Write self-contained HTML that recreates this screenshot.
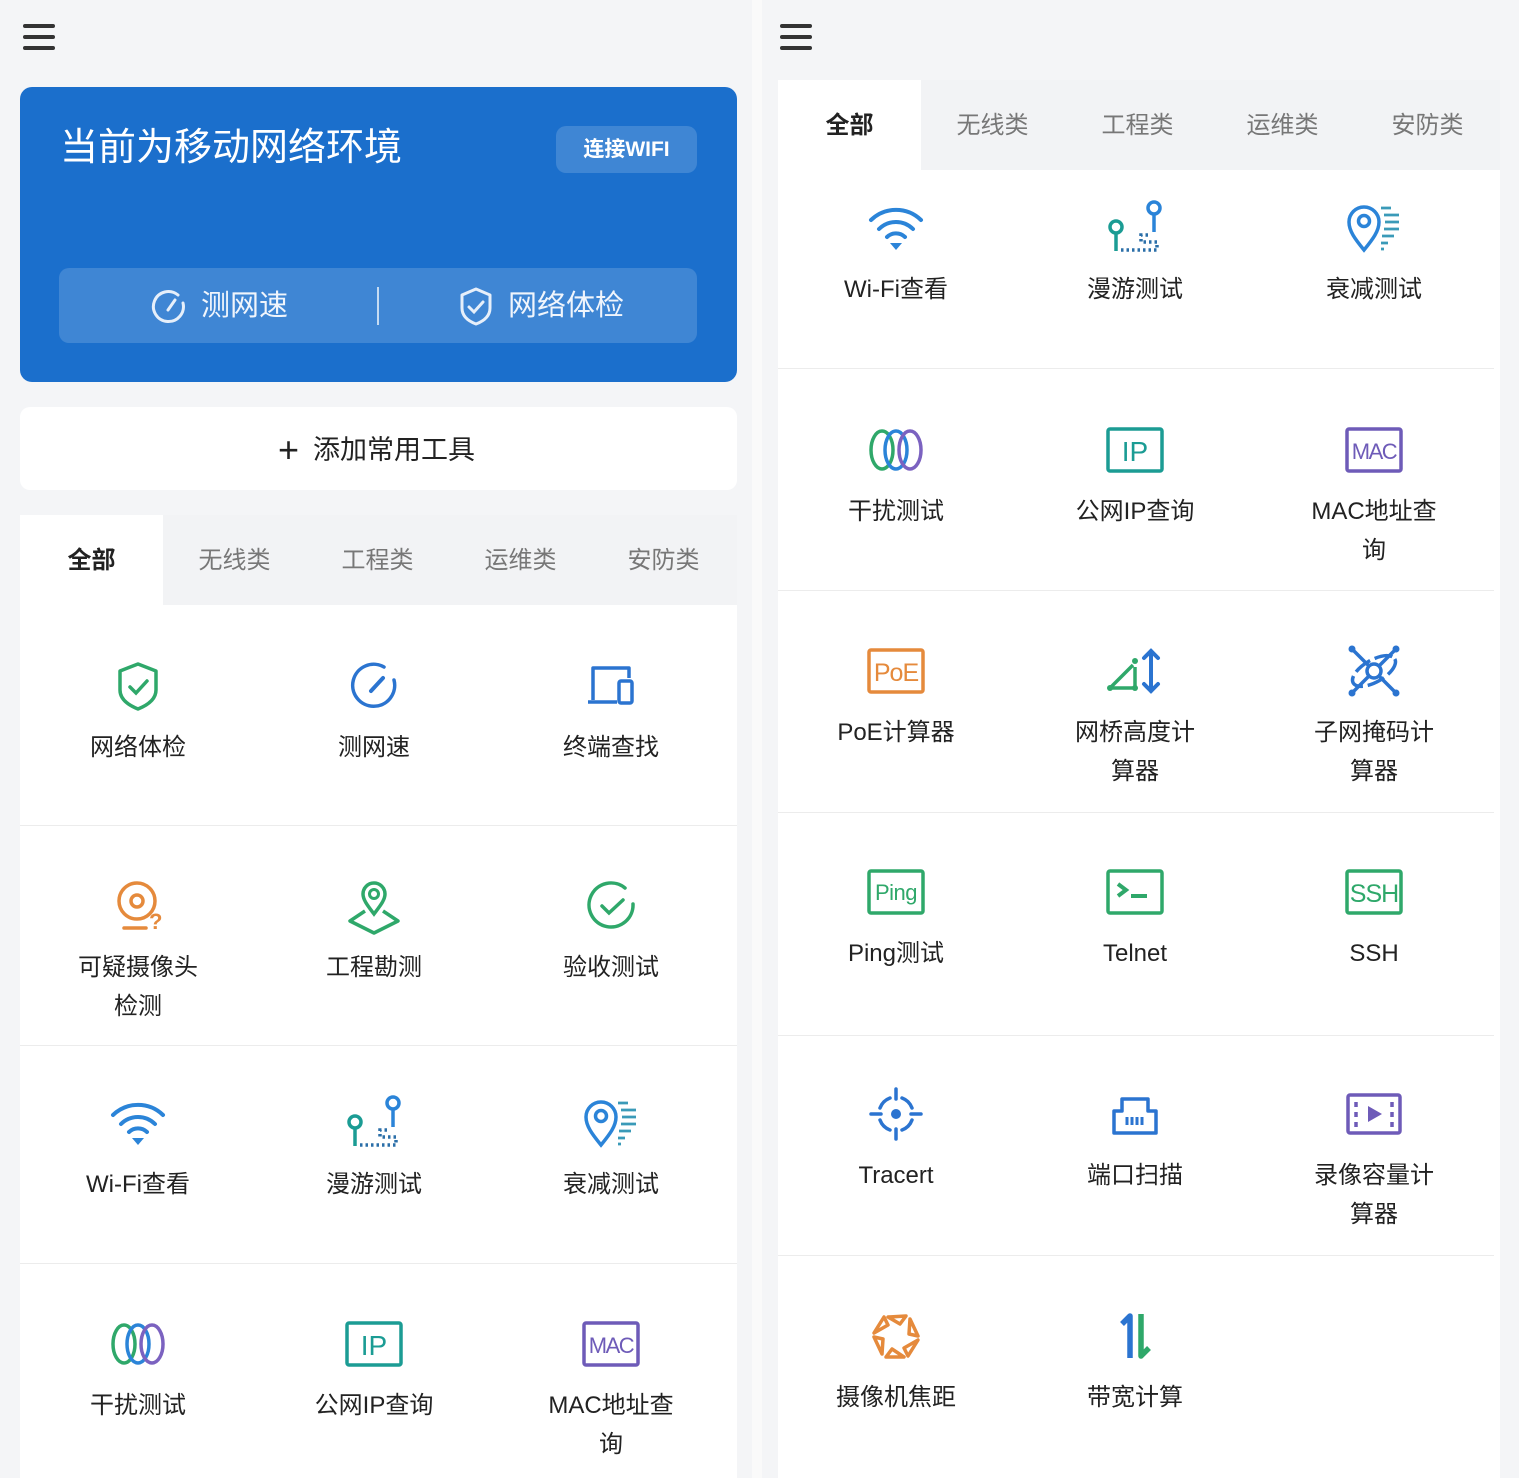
<!DOCTYPE html>
<html><head><meta charset="utf-8">
<style>
*{margin:0;padding:0;box-sizing:border-box}
body{width:1519px;height:1478px;background:#f4f5f7;position:relative;overflow:hidden;font-family:"Liberation Sans","Noto Sans CJK SC",sans-serif;color:#222}
.abs{position:absolute}
.ham{position:absolute;width:32px;height:26px}
.ham i{display:block;height:3.5px;background:#333;border-radius:2px;margin-bottom:7.5px}
.card{position:absolute;background:#fff}
.c{position:absolute;width:240px;text-align:center;margin-top:3px}
.c svg{display:block;margin:0 auto;width:60px;height:60px}
.c div{margin-top:12px;font-size:24px;line-height:39px;color:#222}
.tab{position:absolute;font-size:24px;color:#777;text-align:center;width:143px}
.tab.on{color:#222;font-weight:bold;background:#fff}
.ln{position:absolute;height:1px;background:#ececec}
</style></head><body>
<div class="abs" style="left:752px;top:0;width:10px;height:1478px;background:#fafafa"></div>

<!-- LEFT -->
<div class="ham" style="left:23px;top:24px"><i></i><i></i><i></i></div>
<div class="abs" style="left:20px;top:87px;width:717px;height:295px;background:#1b6fcc;border-radius:12px"></div>
<div class="abs" style="left:60px;top:124px;font-size:38px;color:#fff;line-height:48px">当前为移动网络环境</div>
<div class="abs" style="left:556px;top:126px;width:141px;height:47px;border-radius:10px;background:rgba(255,255,255,.16);color:#fff;font-size:21px;line-height:47px;text-align:center;font-weight:bold">连接WIFI</div>
<div class="abs" style="left:59px;top:268px;width:638px;height:75px;border-radius:10px;background:rgba(255,255,255,.16)"></div>
<div class="abs" style="left:377px;top:287px;width:2px;height:38px;background:rgba(255,255,255,.7)"></div>
<svg class="abs" style="left:150px;top:288px" width="38" height="38" viewBox="0 0 38 38"><path d="M28 7 A15 15 0 1 0 33 15" fill="none" stroke="#e6effa" stroke-width="3" stroke-linecap="round"/><path d="M18 22 L25 12" stroke="#e6effa" stroke-width="3" stroke-linecap="round"/></svg>
<div class="abs" style="left:201px;top:286px;font-size:29px;color:#f0f5fc;line-height:40px">测网速</div>
<svg class="abs" style="left:458px;top:286px" width="36" height="40" viewBox="0 0 36 40"><path d="M18 3 L32 9 V22 C32 30 26 35 18 38 C10 35 4 30 4 22 V9 Z" fill="none" stroke="#e6effa" stroke-width="3" stroke-linejoin="round"/><path d="M11 21 L16 26 L25 16" fill="none" stroke="#e6effa" stroke-width="3" stroke-linecap="round"/></svg>
<div class="abs" style="left:508px;top:286px;font-size:29px;color:#f0f5fc;line-height:40px">网络体检</div>

<div class="card" style="left:20px;top:407px;width:717px;height:83px;border-radius:10px"></div>
<div class="abs" style="left:278px;top:431px;font-size:27px;line-height:38px;color:#222"><span style="font-size:36px;vertical-align:-3px;margin-right:14px">+</span>添加常用工具</div>

<div class="card" style="left:20px;top:515px;width:717px;height:963px"></div>
<div class="abs" style="left:163px;top:515px;width:574px;height:90px;background:#f2f3f5"></div>
<div class="tab on" style="left:20px;top:515px;height:90px;line-height:92px">全部</div>
<div class="tab" style="left:163px;top:515px;line-height:92px">无线类</div>
<div class="tab" style="left:306px;top:515px;line-height:92px">工程类</div>
<div class="tab" style="left:449px;top:515px;line-height:92px">运维类</div>
<div class="tab" style="left:592px;top:515px;line-height:92px">安防类</div>
<div class="ln" style="left:20px;top:825px;width:717px"></div>
<div class="ln" style="left:20px;top:1045px;width:717px"></div>
<div class="ln" style="left:20px;top:1263px;width:717px"></div>

<!-- RIGHT -->
<div class="ham" style="left:780px;top:24px"><i></i><i></i><i></i></div>
<div class="card" style="left:778px;top:80px;width:722px;height:1398px"></div>
<div class="abs" style="left:921px;top:80px;width:579px;height:90px;background:#f2f3f5"></div>
<div class="tab on" style="left:778px;top:80px;height:90px;line-height:92px">全部</div>
<div class="tab" style="left:921px;top:80px;line-height:92px">无线类</div>
<div class="tab" style="left:1066px;top:80px;line-height:92px">工程类</div>
<div class="tab" style="left:1211px;top:80px;line-height:92px">运维类</div>
<div class="tab" style="left:1356px;top:80px;line-height:92px">安防类</div>
<div class="ln" style="left:778px;top:368px;width:716px"></div>
<div class="ln" style="left:778px;top:590px;width:716px"></div>
<div class="ln" style="left:778px;top:812px;width:716px"></div>
<div class="ln" style="left:778px;top:1035px;width:716px"></div>
<div class="ln" style="left:778px;top:1255px;width:716px"></div>

<!-- Left cells -->
<div class="c" style="left:18px;top:653px"><svg viewBox="0 0 60 60"><path d="M30 8 L48 15 V34 C48 43 40 49 30 53 C20 49 12 43 12 34 V15 Z" fill="none" stroke="#2fa86a" stroke-width="3.5" stroke-linejoin="round"/><path d="M22 31 L28 37 L39 25" fill="none" stroke="#2fa86a" stroke-width="3.5" stroke-linecap="round"/></svg><div>网络体检</div></div>
<div class="c" style="left:254px;top:653px"><svg viewBox="0 0 60 60"><path d="M40 11 A21 21 0 1 0 50 24" fill="none" stroke="#2b74d0" stroke-width="3.5" stroke-linecap="round"/><path d="M27 35 L39 22" stroke="#2b74d0" stroke-width="4" stroke-linecap="round"/></svg><div>测网速</div></div>
<div class="c" style="left:491px;top:653px"><svg viewBox="0 0 60 60"><path d="M12 44 V12 H48 V22" fill="none" stroke="#2b74d0" stroke-width="3.5" stroke-linejoin="round"/><path d="M7 46 H36" stroke="#2b74d0" stroke-width="3.5"/><rect x="38" y="25" width="13" height="22" rx="2" fill="none" stroke="#2b74d0" stroke-width="3.5"/></svg><div>终端查找</div></div>

<div class="c" style="left:18px;top:873px"><svg viewBox="0 0 60 60"><circle cx="29" cy="25" r="18" fill="none" stroke="#e58a3c" stroke-width="3.5"/><circle cx="29" cy="25" r="6" fill="none" stroke="#e58a3c" stroke-width="3.5"/><path d="M16 52 H38" stroke="#e58a3c" stroke-width="3.5" stroke-linecap="round"/><text x="41" y="53" font-size="22" font-weight="bold" fill="#e58a3c" font-family="Liberation Sans">?</text></svg><div>可疑摄像头<br>检测</div></div>
<div class="c" style="left:254px;top:873px"><svg viewBox="0 0 60 60"><path d="M30 38 C24 30 19 24 19 18 A11 11 0 0 1 41 18 C41 24 36 30 30 38 Z" fill="none" stroke="#2fa86a" stroke-width="3.5"/><circle cx="30" cy="18" r="4.5" fill="none" stroke="#2fa86a" stroke-width="3"/><path d="M21 35 L6 45 L30 57 L54 45 L39 35" fill="none" stroke="#2fa86a" stroke-width="3.5" stroke-linejoin="round"/></svg><div>工程勘测</div></div>
<div class="c" style="left:491px;top:873px"><svg viewBox="0 0 60 60"><path d="M44 12 A22 22 0 1 0 52 28" fill="none" stroke="#2fa86a" stroke-width="3.5" stroke-linecap="round"/><path d="M21 30 L28 37 L42 24" fill="none" stroke="#2fa86a" stroke-width="3.5" stroke-linecap="round"/></svg><div>验收测试</div></div>

<div class="c" style="left:18px;top:1090px"><svg viewBox="0 0 60 60"><path d="M5 22 A36 36 0 0 1 55 22" fill="none" stroke="#2b84d8" stroke-width="4" stroke-linecap="round"/><path d="M13 31 A24 24 0 0 1 47 31" fill="none" stroke="#2b84d8" stroke-width="4" stroke-linecap="round"/><path d="M21 39 A13 13 0 0 1 39 39" fill="none" stroke="#2b84d8" stroke-width="4" stroke-linecap="round"/><path d="M24 45 H36 L30 52 Z" fill="#2b84d8"/></svg><div>Wi-Fi查看</div></div>
<div class="c" style="left:254px;top:1090px"><svg viewBox="0 0 60 60"><circle cx="11" cy="29" r="6" fill="none" stroke="#1b9c94" stroke-width="3.5"/><path d="M11 35 V53" stroke="#1b9c94" stroke-width="3.5"/><circle cx="49" cy="10" r="6" fill="none" stroke="#2b84d8" stroke-width="3.5"/><path d="M49 16 V34" stroke="#2b84d8" stroke-width="3.5"/><path d="M16 52 H52 V44 H36 V37 H46" fill="none" stroke="#2b6fa8" stroke-width="3.5" stroke-dasharray="2.5 3"/></svg><div>漫游测试</div></div>
<div class="c" style="left:491px;top:1090px"><svg viewBox="0 0 60 60"><path d="M20 52 C11 41 5 33 5 24 A15 15 0 0 1 35 24 C35 33 29 41 20 52 Z" fill="none" stroke="#2b84d8" stroke-width="3.5"/><circle cx="20" cy="23" r="5.5" fill="none" stroke="#2b84d8" stroke-width="3.5"/><path d="M37 10 H47 M40 17 H55 M41 24 H55 M40 31 H55 M38 38 H50 M37 45 H44 M37 51 H40" stroke="#3a9ab8" stroke-width="2.8"/></svg><div>衰减测试</div></div>

<div class="c" style="left:18px;top:1311px"><svg viewBox="0 0 60 60"><ellipse cx="16" cy="30" rx="11" ry="19" fill="none" stroke="#2fa86a" stroke-width="3.5"/><ellipse cx="30" cy="30" rx="11" ry="19" fill="none" stroke="#2b84d8" stroke-width="3.5"/><ellipse cx="44" cy="30" rx="11" ry="19" fill="none" stroke="#7b62c0" stroke-width="3.5"/></svg><div>干扰测试</div></div>
<div class="c" style="left:254px;top:1311px"><svg viewBox="0 0 60 60"><rect x="3" y="9" width="54" height="42" rx="2" fill="none" stroke="#1b9c94" stroke-width="3.5"/><text x="30" y="41" text-anchor="middle" font-size="28" fill="#1b9c94" font-family="Liberation Sans">IP</text></svg><div>公网IP查询</div></div>
<div class="c" style="left:491px;top:1311px"><svg viewBox="0 0 60 60"><rect x="3" y="9" width="54" height="42" rx="2" fill="none" stroke="#6e5bb8" stroke-width="3.5"/><text x="30" y="39" text-anchor="middle" font-size="22" fill="#6e5bb8" font-family="Liberation Sans" letter-spacing="-1.5">MAC</text></svg><div>MAC地址查<br>询</div></div>

<!-- Right cells -->
<div class="c" style="left:776px;top:195px"><svg viewBox="0 0 60 60"><path d="M5 22 A36 36 0 0 1 55 22" fill="none" stroke="#2b84d8" stroke-width="4" stroke-linecap="round"/><path d="M13 31 A24 24 0 0 1 47 31" fill="none" stroke="#2b84d8" stroke-width="4" stroke-linecap="round"/><path d="M21 39 A13 13 0 0 1 39 39" fill="none" stroke="#2b84d8" stroke-width="4" stroke-linecap="round"/><path d="M24 45 H36 L30 52 Z" fill="#2b84d8"/></svg><div>Wi-Fi查看</div></div>
<div class="c" style="left:1015px;top:195px"><svg viewBox="0 0 60 60"><circle cx="11" cy="29" r="6" fill="none" stroke="#1b9c94" stroke-width="3.5"/><path d="M11 35 V53" stroke="#1b9c94" stroke-width="3.5"/><circle cx="49" cy="10" r="6" fill="none" stroke="#2b84d8" stroke-width="3.5"/><path d="M49 16 V34" stroke="#2b84d8" stroke-width="3.5"/><path d="M16 52 H52 V44 H36 V37 H46" fill="none" stroke="#2b6fa8" stroke-width="3.5" stroke-dasharray="2.5 3"/></svg><div>漫游测试</div></div>
<div class="c" style="left:1254px;top:195px"><svg viewBox="0 0 60 60"><path d="M20 52 C11 41 5 33 5 24 A15 15 0 0 1 35 24 C35 33 29 41 20 52 Z" fill="none" stroke="#2b84d8" stroke-width="3.5"/><circle cx="20" cy="23" r="5.5" fill="none" stroke="#2b84d8" stroke-width="3.5"/><path d="M37 10 H47 M40 17 H55 M41 24 H55 M40 31 H55 M38 38 H50 M37 45 H44 M37 51 H40" stroke="#3a9ab8" stroke-width="2.8"/></svg><div>衰减测试</div></div>

<div class="c" style="left:776px;top:417px"><svg viewBox="0 0 60 60"><ellipse cx="16" cy="30" rx="11" ry="19" fill="none" stroke="#2fa86a" stroke-width="3.5"/><ellipse cx="30" cy="30" rx="11" ry="19" fill="none" stroke="#2b84d8" stroke-width="3.5"/><ellipse cx="44" cy="30" rx="11" ry="19" fill="none" stroke="#7b62c0" stroke-width="3.5"/></svg><div>干扰测试</div></div>
<div class="c" style="left:1015px;top:417px"><svg viewBox="0 0 60 60"><rect x="3" y="9" width="54" height="42" rx="2" fill="none" stroke="#1b9c94" stroke-width="3.5"/><text x="30" y="41" text-anchor="middle" font-size="28" fill="#1b9c94" font-family="Liberation Sans">IP</text></svg><div>公网IP查询</div></div>
<div class="c" style="left:1254px;top:417px"><svg viewBox="0 0 60 60"><rect x="3" y="9" width="54" height="42" rx="2" fill="none" stroke="#6e5bb8" stroke-width="3.5"/><text x="30" y="39" text-anchor="middle" font-size="22" fill="#6e5bb8" font-family="Liberation Sans" letter-spacing="-1.5">MAC</text></svg><div>MAC地址查<br>询</div></div>

<div class="c" style="left:776px;top:638px"><svg viewBox="0 0 60 60"><rect x="3" y="9" width="54" height="42" rx="2" fill="none" stroke="#e58a3c" stroke-width="3.5"/><text x="30" y="40" text-anchor="middle" font-size="25" fill="#e58a3c" font-family="Liberation Sans" letter-spacing="-1">PoE</text></svg><div>PoE计算器</div></div>
<div class="c" style="left:1015px;top:638px"><svg viewBox="0 0 60 60"><path d="M5 47 L28 24 M5 47 H30 M30 47 V26" fill="none" stroke="#2fa86a" stroke-width="3.5"/><circle cx="5" cy="47" r="3" fill="#2fa86a"/><circle cx="30" cy="47" r="3" fill="#2fa86a"/><circle cx="30" cy="20" r="3" fill="#2fa86a"/><path d="M46 10 V50 M39 17 L46 10 L53 17 M39 43 L46 50 L53 43" fill="none" stroke="#2b74d0" stroke-width="4" stroke-linecap="round"/></svg><div>网桥高度计<br>算器</div></div>
<div class="c" style="left:1254px;top:638px"><svg viewBox="0 0 60 60"><path d="M8 8 L52 52 M52 8 L8 52" stroke="#2b74d0" stroke-width="3.5"/><ellipse cx="30" cy="30" rx="24" ry="11" transform="rotate(-30 30 30)" fill="none" stroke="#2b74d0" stroke-width="3.5" stroke-dasharray="18 5"/><circle cx="30" cy="30" r="7" fill="#fff" stroke="#2b74d0" stroke-width="3.5"/><circle cx="8" cy="8" r="3.5" fill="#2b74d0"/><circle cx="52" cy="8" r="3.5" fill="#2b74d0"/><circle cx="8" cy="52" r="3.5" fill="#2b74d0"/><circle cx="52" cy="52" r="3.5" fill="#2b74d0"/></svg><div>子网掩码计<br>算器</div></div>

<div class="c" style="left:776px;top:859px"><svg viewBox="0 0 60 60"><rect x="3" y="9" width="54" height="42" rx="2" fill="none" stroke="#2fa86a" stroke-width="3.5"/><text x="30" y="38" text-anchor="middle" font-size="22" fill="#2fa86a" font-family="Liberation Sans" letter-spacing="-0.5">Ping</text></svg><div>Ping测试</div></div>
<div class="c" style="left:1015px;top:859px"><svg viewBox="0 0 60 60"><rect x="3" y="9" width="54" height="42" rx="2" fill="none" stroke="#2fa86a" stroke-width="3.5"/><path d="M13 22 L21 28 L13 34" fill="none" stroke="#2fa86a" stroke-width="4"/><path d="M26 34 H42" stroke="#2fa86a" stroke-width="4"/></svg><div>Telnet</div></div>
<div class="c" style="left:1254px;top:859px"><svg viewBox="0 0 60 60"><rect x="3" y="9" width="54" height="42" rx="2" fill="none" stroke="#2fa86a" stroke-width="3.5"/><text x="30" y="40" text-anchor="middle" font-size="25" fill="#2fa86a" font-family="Liberation Sans" letter-spacing="-1">SSH</text></svg><div>SSH</div></div>

<div class="c" style="left:776px;top:1081px"><svg viewBox="0 0 60 60"><g fill="none" stroke="#2b74d0" stroke-width="3.5" stroke-linecap="round"><path d="M14 24 A17 17 0 0 1 24 14"/><path d="M36 14 A17 17 0 0 1 46 24"/><path d="M46 36 A17 17 0 0 1 36 46"/><path d="M24 46 A17 17 0 0 1 14 36"/><path d="M30 5 V15 M30 45 V55 M5 30 H15 M45 30 H55"/></g><circle cx="30" cy="30" r="5" fill="#2b74d0"/></svg><div>Tracert</div></div>
<div class="c" style="left:1015px;top:1081px"><svg viewBox="0 0 60 60"><path d="M9 49 V27 H17 V15 H43 V27 H51 V49 Z" fill="none" stroke="#2b74d0" stroke-width="3.5" stroke-linejoin="round"/><path d="M22 33 V41 M27 33 V41 M32 33 V41 M37 33 V41" stroke="#2b74d0" stroke-width="3"/></svg><div>端口扫描</div></div>
<div class="c" style="left:1254px;top:1081px"><svg viewBox="0 0 60 60"><rect x="4" y="11" width="52" height="38" rx="2" fill="none" stroke="#6e5bb8" stroke-width="3.5"/><path d="M12 18 V23 M12 28 V33 M12 38 V43 M48 18 V23 M48 28 V33 M48 38 V43" stroke="#6e5bb8" stroke-width="3.5"/><path d="M24 22 L38 30 L24 38 Z" fill="#6e5bb8"/></svg><div>录像容量计<br>算器</div></div>

<div class="c" style="left:776px;top:1303px"><svg viewBox="0 0 60 60"><g fill="none" stroke="#e58a3c" stroke-width="3.5" stroke-linejoin="round"><path d="M22 11 L40 10 L34 18 Z"/><path d="M44 13 L52 30 L43 28 Z"/><path d="M52 34 L42 50 L38 42 Z"/><path d="M38 51 L20 51 L26 43 Z"/><path d="M16 48 L8 31 L17 33 Z"/><path d="M8 27 L18 11 L22 19 Z"/></g></svg><div>摄像机焦距</div></div>
<div class="c" style="left:1015px;top:1303px"><svg viewBox="0 0 60 60"><path d="M25 52 V10 L17 18" fill="none" stroke="#2b74d0" stroke-width="5.5" stroke-linejoin="round"/><path d="M36 8 V50 L44 42" fill="none" stroke="#2fa86a" stroke-width="5.5" stroke-linejoin="round"/></svg><div>带宽计算</div></div>
</body></html>
